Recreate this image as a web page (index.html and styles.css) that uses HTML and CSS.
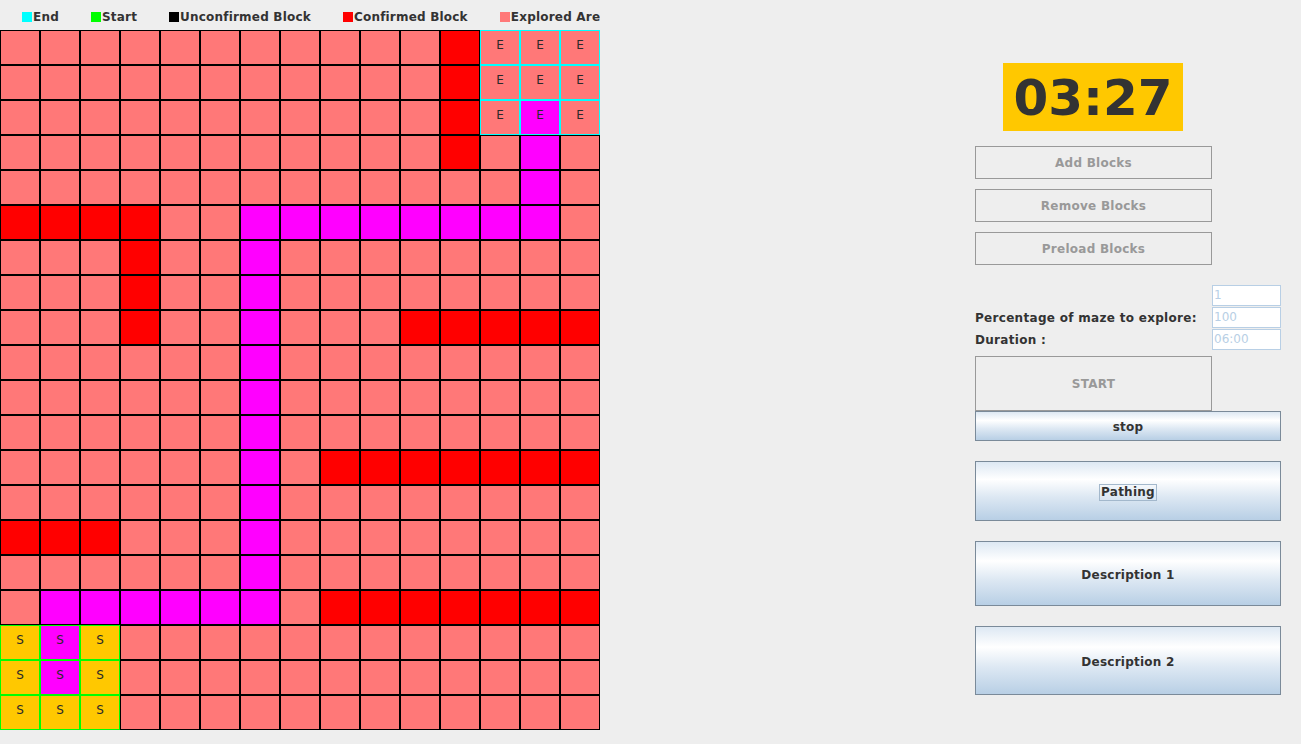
FILE: index.html
```html
<!DOCTYPE html>
<html>
<head>
<meta charset="utf-8">
<title>Maze Explorer</title>
<link rel="stylesheet" href="styles.css">
</head>
<body>
<div class="app">
  <div class="left">
    <div class="legend">
      <div class="legend-item"><span class="swatch sw-end"></span>End</div>
      <div class="legend-item"><span class="swatch sw-start"></span>Start</div>
      <div class="legend-item"><span class="swatch sw-unconf"></span>Unconfirmed Block</div>
      <div class="legend-item"><span class="swatch sw-conf"></span>Confirmed Block</div>
      <div class="legend-item"><span class="swatch sw-expl"></span>Explored Area</div>
    </div>
    <div class="grid">
      <!-- row 0 -->
      <div class="cell"></div><div class="cell"></div><div class="cell"></div><div class="cell"></div><div class="cell"></div><div class="cell"></div><div class="cell"></div><div class="cell"></div><div class="cell"></div><div class="cell"></div><div class="cell"></div><div class="cell red"></div><div class="cell end">E</div><div class="cell end">E</div><div class="cell end">E</div>
      <!-- row 1 -->
      <div class="cell"></div><div class="cell"></div><div class="cell"></div><div class="cell"></div><div class="cell"></div><div class="cell"></div><div class="cell"></div><div class="cell"></div><div class="cell"></div><div class="cell"></div><div class="cell"></div><div class="cell red"></div><div class="cell end">E</div><div class="cell end">E</div><div class="cell end">E</div>
      <!-- row 2 -->
      <div class="cell"></div><div class="cell"></div><div class="cell"></div><div class="cell"></div><div class="cell"></div><div class="cell"></div><div class="cell"></div><div class="cell"></div><div class="cell"></div><div class="cell"></div><div class="cell"></div><div class="cell red"></div><div class="cell end">E</div><div class="cell end path">E</div><div class="cell end">E</div>
      <!-- row 3 -->
      <div class="cell"></div><div class="cell"></div><div class="cell"></div><div class="cell"></div><div class="cell"></div><div class="cell"></div><div class="cell"></div><div class="cell"></div><div class="cell"></div><div class="cell"></div><div class="cell"></div><div class="cell red"></div><div class="cell"></div><div class="cell path"></div><div class="cell"></div>
      <!-- row 4 -->
      <div class="cell"></div><div class="cell"></div><div class="cell"></div><div class="cell"></div><div class="cell"></div><div class="cell"></div><div class="cell"></div><div class="cell"></div><div class="cell"></div><div class="cell"></div><div class="cell"></div><div class="cell"></div><div class="cell"></div><div class="cell path"></div><div class="cell"></div>
      <!-- row 5 -->
      <div class="cell red"></div><div class="cell red"></div><div class="cell red"></div><div class="cell red"></div><div class="cell"></div><div class="cell"></div><div class="cell path"></div><div class="cell path"></div><div class="cell path"></div><div class="cell path"></div><div class="cell path"></div><div class="cell path"></div><div class="cell path"></div><div class="cell path"></div><div class="cell"></div>
      <!-- row 6 -->
      <div class="cell"></div><div class="cell"></div><div class="cell"></div><div class="cell red"></div><div class="cell"></div><div class="cell"></div><div class="cell path"></div><div class="cell"></div><div class="cell"></div><div class="cell"></div><div class="cell"></div><div class="cell"></div><div class="cell"></div><div class="cell"></div><div class="cell"></div>
      <!-- row 7 -->
      <div class="cell"></div><div class="cell"></div><div class="cell"></div><div class="cell red"></div><div class="cell"></div><div class="cell"></div><div class="cell path"></div><div class="cell"></div><div class="cell"></div><div class="cell"></div><div class="cell"></div><div class="cell"></div><div class="cell"></div><div class="cell"></div><div class="cell"></div>
      <!-- row 8 -->
      <div class="cell"></div><div class="cell"></div><div class="cell"></div><div class="cell red"></div><div class="cell"></div><div class="cell"></div><div class="cell path"></div><div class="cell"></div><div class="cell"></div><div class="cell"></div><div class="cell red"></div><div class="cell red"></div><div class="cell red"></div><div class="cell red"></div><div class="cell red"></div>
      <!-- row 9 -->
      <div class="cell"></div><div class="cell"></div><div class="cell"></div><div class="cell"></div><div class="cell"></div><div class="cell"></div><div class="cell path"></div><div class="cell"></div><div class="cell"></div><div class="cell"></div><div class="cell"></div><div class="cell"></div><div class="cell"></div><div class="cell"></div><div class="cell"></div>
      <!-- row 10 -->
      <div class="cell"></div><div class="cell"></div><div class="cell"></div><div class="cell"></div><div class="cell"></div><div class="cell"></div><div class="cell path"></div><div class="cell"></div><div class="cell"></div><div class="cell"></div><div class="cell"></div><div class="cell"></div><div class="cell"></div><div class="cell"></div><div class="cell"></div>
      <!-- row 11 -->
      <div class="cell"></div><div class="cell"></div><div class="cell"></div><div class="cell"></div><div class="cell"></div><div class="cell"></div><div class="cell path"></div><div class="cell"></div><div class="cell"></div><div class="cell"></div><div class="cell"></div><div class="cell"></div><div class="cell"></div><div class="cell"></div><div class="cell"></div>
      <!-- row 12 -->
      <div class="cell"></div><div class="cell"></div><div class="cell"></div><div class="cell"></div><div class="cell"></div><div class="cell"></div><div class="cell path"></div><div class="cell"></div><div class="cell red"></div><div class="cell red"></div><div class="cell red"></div><div class="cell red"></div><div class="cell red"></div><div class="cell red"></div><div class="cell red"></div>
      <!-- row 13 -->
      <div class="cell"></div><div class="cell"></div><div class="cell"></div><div class="cell"></div><div class="cell"></div><div class="cell"></div><div class="cell path"></div><div class="cell"></div><div class="cell"></div><div class="cell"></div><div class="cell"></div><div class="cell"></div><div class="cell"></div><div class="cell"></div><div class="cell"></div>
      <!-- row 14 -->
      <div class="cell red"></div><div class="cell red"></div><div class="cell red"></div><div class="cell"></div><div class="cell"></div><div class="cell"></div><div class="cell path"></div><div class="cell"></div><div class="cell"></div><div class="cell"></div><div class="cell"></div><div class="cell"></div><div class="cell"></div><div class="cell"></div><div class="cell"></div>
      <!-- row 15 -->
      <div class="cell"></div><div class="cell"></div><div class="cell"></div><div class="cell"></div><div class="cell"></div><div class="cell"></div><div class="cell path"></div><div class="cell"></div><div class="cell"></div><div class="cell"></div><div class="cell"></div><div class="cell"></div><div class="cell"></div><div class="cell"></div><div class="cell"></div>
      <!-- row 16 -->
      <div class="cell"></div><div class="cell path"></div><div class="cell path"></div><div class="cell path"></div><div class="cell path"></div><div class="cell path"></div><div class="cell path"></div><div class="cell"></div><div class="cell red"></div><div class="cell red"></div><div class="cell red"></div><div class="cell red"></div><div class="cell red"></div><div class="cell red"></div><div class="cell red"></div>
      <!-- row 17 -->
      <div class="cell start">S</div><div class="cell start path">S</div><div class="cell start">S</div><div class="cell"></div><div class="cell"></div><div class="cell"></div><div class="cell"></div><div class="cell"></div><div class="cell"></div><div class="cell"></div><div class="cell"></div><div class="cell"></div><div class="cell"></div><div class="cell"></div><div class="cell"></div>
      <!-- row 18 -->
      <div class="cell start">S</div><div class="cell start path">S</div><div class="cell start">S</div><div class="cell"></div><div class="cell"></div><div class="cell"></div><div class="cell"></div><div class="cell"></div><div class="cell"></div><div class="cell"></div><div class="cell"></div><div class="cell"></div><div class="cell"></div><div class="cell"></div><div class="cell"></div>
      <!-- row 19 -->
      <div class="cell start">S</div><div class="cell start">S</div><div class="cell start">S</div><div class="cell"></div><div class="cell"></div><div class="cell"></div><div class="cell"></div><div class="cell"></div><div class="cell"></div><div class="cell"></div><div class="cell"></div><div class="cell"></div><div class="cell"></div><div class="cell"></div><div class="cell"></div>
    </div>
  </div>

  <div class="right">
    <div class="timer">03:27</div>
    <button class="btn btn-disabled btn-small" disabled>Add Blocks</button>
    <button class="btn btn-disabled btn-small btn-gap" disabled>Remove Blocks</button>
    <button class="btn btn-disabled btn-small btn-gap" disabled>Preload Blocks</button>
    <div class="form">
      <div class="label"></div>
      <div class="field">1</div>
      <div class="label">Percentage of maze to explore:</div>
      <div class="field">100</div>
      <div class="label">Duration :</div>
      <div class="field">06:00</div>
    </div>
    <button class="btn btn-disabled btn-start" disabled>START</button>
    <button class="btn btn-ocean btn-stop">stop</button>
    <button class="btn btn-ocean btn-pathing"><span class="focus">Pathing</span></button>
    <button class="btn btn-ocean btn-desc1">Description 1</button>
    <button class="btn btn-ocean btn-desc2">Description 2</button>
  </div>
</div>
</body>
</html>
```

FILE: styles.css
```css
* {
  box-sizing: border-box;
}

html, body {
  margin: 0;
  padding: 0;
  background: #eeeeee;
  font-family: "DejaVu Sans", "Liberation Sans", sans-serif;
  color: #333333;
}

.app {
  display: flex;
  width: 1301px;
  height: 744px;
  overflow: hidden;
}

.left {
  width: 600px;
  flex: none;
  display: flex;
  flex-direction: column;
}

.legend {
  height: 30px;
  padding: 4px 0 0 22px;
  display: flex;
  align-items: center;
  gap: 32px;
  white-space: nowrap;
  overflow: hidden;
  font-size: 12px;
  font-weight: bold;
  letter-spacing: 0.2px;
  color: #333333;
}

.legend-item {
  display: flex;
  align-items: center;
  flex: none;
}

.swatch {
  display: inline-block;
  width: 10px;
  height: 10px;
  margin-right: 1px;
}

.sw-end { background: #00ffff; }
.sw-start { background: #00ff00; }
.sw-unconf { background: #000000; }
.sw-conf { background: #ff0000; }
.sw-expl { background: #ff7878; }

.grid {
  display: grid;
  grid-template-columns: repeat(15, 40px);
  grid-template-rows: repeat(20, 35px);
}

.cell {
  width: 40px;
  height: 35px;
  border: 1px solid #000000;
  background: #ff7878;
  text-align: center;
  font-size: 12px;
  line-height: 14px;
  padding-top: 7px;
  color: #2a2a2a;
}

.cell.red { background: #ff0000; }
.cell.end { border-color: #00ffff; }
.cell.start { border-color: #00ff00; background: #ffc800; }
.cell.path { background: #ff00ff; }

.right {
  width: 306px;
  margin-left: 375px;
  padding-top: 63px;
  display: flex;
  flex-direction: column;
  align-items: flex-start;
}

.timer {
  width: 180px;
  height: 68px;
  margin-left: 28px;
  background: #ffc800;
  color: #333333;
  font-size: 50px;
  font-weight: bold;
  display: flex;
  align-items: center;
  justify-content: center;
  line-height: 1;
  padding-top: 1px;
}

.btn {
  font-family: "DejaVu Sans", "Liberation Sans", sans-serif;
  font-size: 12px;
  font-weight: bold;
  letter-spacing: 0.25px;
  padding: 0;
  margin: 0;
  display: flex;
  align-items: center;
  justify-content: center;
  cursor: default;
}

.btn-disabled {
  width: 237px;
  background: #eeeeee;
  border: 1px solid #999999;
  color: #999999;
}

.btn-small {
  height: 33px;
  margin-top: 15px;
}

.btn-small.btn-gap {
  margin-top: 10px;
}

.form {
  margin-top: 20px;
  display: grid;
  grid-template-columns: 237px 69px;
  grid-auto-rows: 21px;
  row-gap: 1px;
}

.label {
  font-size: 12px;
  font-weight: bold;
  letter-spacing: 0.3px;
  color: #333333;
  display: flex;
  align-items: center;
  white-space: nowrap;
  padding-top: 1px;
}

.field {
  background: #ffffff;
  border: 1px solid #b8cfe5;
  color: #b8cfe5;
  font-size: 12px;
  line-height: 19px;
  padding-left: 1px;
}

.btn-start {
  height: 55px;
  margin-top: 6px;
}

.btn-ocean {
  width: 306px;
  border: 1px solid #7a8a99;
  color: #333333;
  padding-top: 2px;
  background: linear-gradient(to bottom, #dde8f3 0%, #ffffff 30%, #dde8f3 60%, #b8cfe5 100%);
}

.btn-stop {
  height: 30px;
}

.btn-pathing {
  height: 60px;
  margin-top: 20px;
}

.btn-desc1 {
  height: 65px;
  margin-top: 20px;
}

.btn-desc2 {
  height: 69px;
  margin-top: 20px;
}

.focus {
  border: 1px solid #a3b8cc;
  padding: 0 1px;
  line-height: 15px;
}
```
